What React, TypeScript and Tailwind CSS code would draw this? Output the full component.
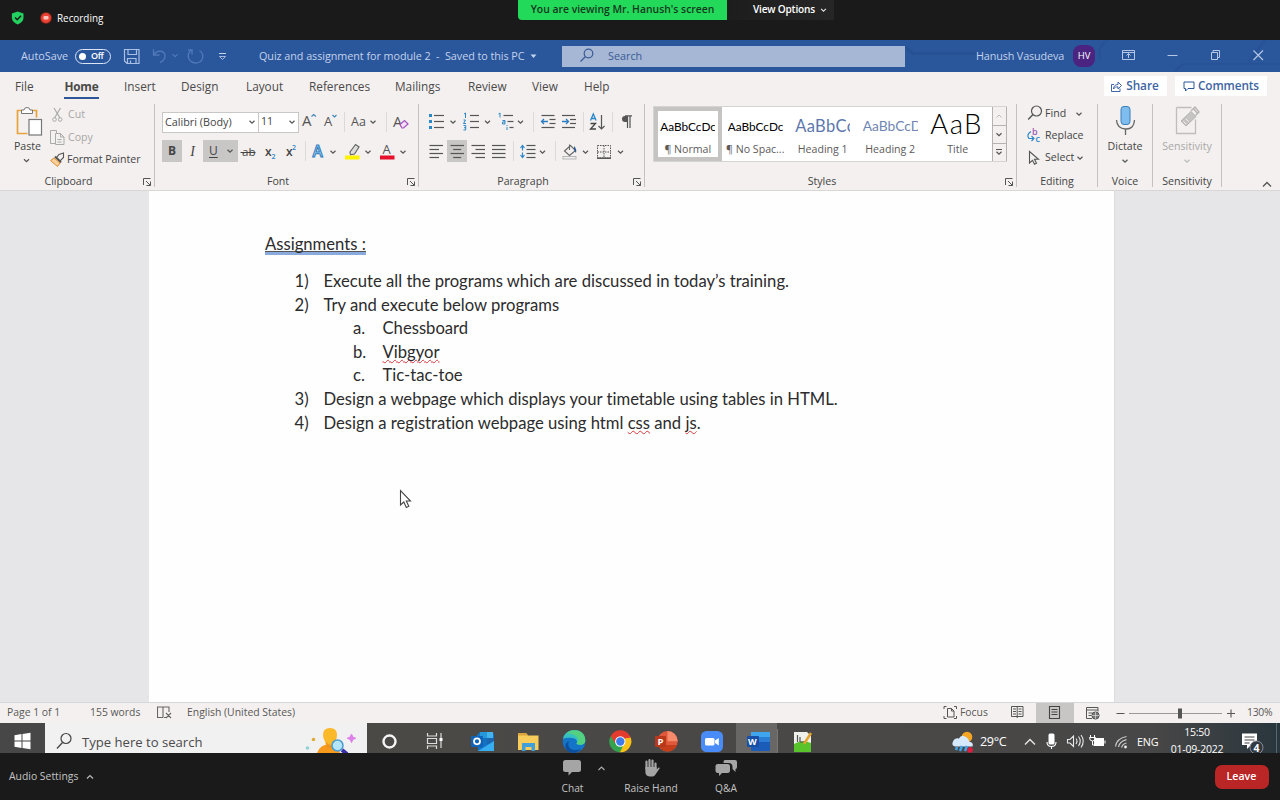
import type { ReactNode } from "react";

/** Vector icon whose user space starts at (x, y) and measures w × h pixels. */
function Ico({ x, y, w, h, children, className = "" }: { x: number; y: number; w: number; h: number; children: ReactNode; className?: string }) {
  return (
    <svg width={w} height={h} viewBox={`${x} ${y} ${w} ${h}`} fill="none" className={`block shrink-0 ${className}`}>
      {children}
    </svg>
  );
}

function Chev({ x, y, c = "#555", s = 2.5 }: { x: number; y: number; c?: string; s?: number }) {
  return <path d={`M${x - s} ${y - s / 2}l${s} ${s}l${s} ${-s}`} stroke={c} strokeWidth="1.2" />;
}

function Launcher() {
  return (
    <Ico x={142} y={178} w={10} h={10}>
      <path d="M143.5 186v-6.500h7" stroke="#555" />
      <path d="M146 182l4.500 4.500M150.500 182.500v4h-4" stroke="#555" />
    </Ico>
  );
}

function Group({ width, pad, label, launcher, children }: { width: string; pad: string; label: string; launcher?: boolean; children: ReactNode }) {
  return (
    <section className={`flex h-[86px] shrink-0 flex-col ${width}`}>
      <div className="flex h-[83px] flex-col border-r border-[#c4c2c1]">
        <div className={`h-[69px] shrink-0 ${pad}`}>{children}</div>
        <div className={`flex h-[18px] shrink-0 items-center ${launcher ? "pr-[2px]" : ""}`}>
          <span className={`flex-1 text-center ${launcher ? "pr-[5px]" : ""}`}>{label}</span>
          {launcher && <Launcher />}
        </div>
      </div>
    </section>
  );
}

function Sep() {
  return <i className="h-5 w-px shrink-0 bg-[#dcdad9]" />;
}

const lines = (x: number, y: number, w: number[], gap: number, off: number[] = []) =>
  w.map((n, i) => <path key={i} d={`M${x + (off[i] ?? 0)} ${y + i * gap}h${n}`} stroke="#555" strokeWidth="1.2" />);

function TopBar() {
  return (
    <header className="flex h-10 shrink-0 items-start bg-[#1a1a1a] text-white">
      <div className="flex h-9 w-[518px] items-center">
        <Ico x={8} y={8} w={44} h={20} className="ml-2">
          <path d="M17.700 11.500l5.800 2v4.500c0 3-2.500 5-5.800 6.600c-3.300-1.600-5.800-3.600-5.800-6.600v-4.500z" fill="#23d160" />
          <path d="M15 17.500l2.200 2.200l3.800-4" stroke="#1a1a1a" strokeWidth="1.500" />
          <circle cx="46" cy="18" r="6" fill="#7a2018" />
          <circle cx="46" cy="18" r="5" fill="#ea4335" />
          <rect x="43.500" y="16" width="5" height="3.500" rx="1" fill="#ffc4bc" />
        </Ico>
        <span className="ml-[5px] text-[9.9px]">Recording</span>
      </div>
      <div className="flex h-5 w-[209px] items-center justify-center whitespace-nowrap rounded-bl bg-[#23d959] text-[10.400px] font-semibold text-[#15381f]">
        You are viewing Mr. Hanush's screen
      </div>
      <div className="flex h-5 w-[107px] items-center gap-[5px] bg-[linear-gradient(90deg,#1d1d1d,#262626)] pl-[26px] text-[10.100px] font-semibold tracking-[-0.02em]">
        View Options
        <Ico x={0} y={0} w={7} h={6}><Chev x={3.5} y={3} c="#ddd" s={2.4} /></Ico>
      </div>
    </header>
  );
}

function TitleBar() {
  return (
    <div className="flex h-8 shrink-0 items-center bg-[#2a569b] text-[10.8px] text-[#c3d2ec]">
      <span className="ml-[21px] w-[54px]">AutoSave</span>
      <div className="flex h-[15px] w-9 items-center gap-[5px] rounded-full border-[1.5px] border-[#dce5f5] pl-[3px] text-[9px] font-semibold tracking-[-0.05em] text-white">
        <i className="size-[7px] rounded-full bg-white" />
        Off
      </div>
      <Ico x={111} y={46} w={148} h={20}>
        <path d="M124.500 49.500h14.500v14h-12l-2.500-2.500zM128 49.500v5h8.500v-5M127.500 63.500v-5h8.500v5M130.500 63v-2.500" stroke="#a9bfe3" strokeWidth="1.200" />
        <path d="M153.500 49v6h6M154 54.500c3-5 11-4 11 1.500c0 3-2 5-5 6.500" stroke="#4f78b8" strokeWidth="1.400" />
        <Chev x={175} y={55.500} c="#4f78b8" />
        <path d="M191 50.500c-5 4-3 12 4.500 12.500c8 0 9.500-9 4-12.500M188 50h4v4.500" stroke="#4f78b8" strokeWidth="1.400" />
        <path d="M219 53.500h7" stroke="#c3d2ec" />
        <path d="M219.500 56.500l3 3l3-3z" stroke="#c3d2ec" strokeWidth=".8" />
      </Ico>
      <span className="w-[270px] shrink-0 whitespace-pre tracking-[-0.005em]">Quiz and assignment for module 2  -  Saved to this PC</span>
      <Ico x={529} y={50} w={8} h={10}><path d="M530.500 53.500h6l-3 3.500z" fill="#c3d2ec" /></Ico>
      <div className="ml-[25px] flex h-[21px] w-[343px] shrink-0 items-center bg-[#a5b7d4] text-[#3a5a96]">
        <Ico x={562} y={46} w={46} h={20}>
          <circle cx="588.500" cy="53.500" r="4.300" stroke="#3a5a96" strokeWidth="1.200" />
          <path d="M585.500 56.500l-5 5" stroke="#3a5a96" strokeWidth="1.300" />
        </Ico>
        Search
      </div>
      <Ico x={905} y={40} w={71} h={32}>
        <path d="M905 47l8 6.500h63" stroke="#214b8b" strokeWidth="3" opacity=".5" />
      </Ico>
      <span className="w-[97px] shrink-0 tracking-[-0.012em]">Hanush Vasudeva</span>
      <span className="flex size-[22px] shrink-0 items-center justify-center rounded-lg bg-[#4b2380] text-[9.500px] text-white">HV</span>
      <Ico x={1095} y={40} w={185} h={32}>
        <path d="M1175 71l8-7h97M1247 64l18-24M1100 60q-3-14 8-20" stroke="#214b8b" strokeWidth="2" opacity=".35" />
        <path d="M1122.500 50.500h12v9h-12zM1122.500 52.500h12M1128.500 58v-4.500M1126.500 55.500l2-2l2 2" stroke="#b6c8e6" />
        <path d="M1167.500 55.500h10" stroke="#b6c8e6" />
        <path d="M1211.500 52.500h6v7h-6zM1213 52v-1.500h6.500v7h-1.500" stroke="#b6c8e6" />
        <path d="M1253.500 50.500l9.500 9.500M1263 50.500l-9.500 9.500" stroke="#b6c8e6" strokeWidth="1.100" />
      </Ico>
    </div>
  );
}

function Tabs() {
  return (
    <nav className="flex h-8 shrink-0 items-center text-[11.8px] text-[#4c4a49]">
      <span className="ml-[15px] w-[49px] shrink-0 pb-[3px]">File</span>
      <span className="w-[60px] shrink-0">
        <b className="inline-flex h-[22px] w-[35px] items-start justify-center border-b-[2.500px] border-[#2b579a] font-bold leading-[18px] tracking-[-0.02em] text-[#4a4948]">Home</b>
      </span>
      <span className="w-[57px] shrink-0 pb-[3px]">Insert</span>
      <span className="w-[65px] shrink-0 pb-[3px]">Design</span>
      <span className="w-[63px] shrink-0 pb-[3px]">Layout</span>
      <span className="w-[86px] shrink-0 pb-[3px]">References</span>
      <span className="w-[73px] shrink-0 pb-[3px]">Mailings</span>
      <span className="w-16 shrink-0 pb-[3px]">Review</span>
      <span className="w-[52px] shrink-0 pb-[3px]">View</span>
      <span className="w-[520px] shrink-0 pb-[3px]">Help</span>
      <button className="mb-1 flex h-5 w-[63px] shrink-0 items-center justify-center gap-[4px] bg-white pr-px text-[11.800px] font-semibold text-[#3d64a2]">
        <Ico x={1111} y={80} w={11} h={13}>
          <path d="M1114 84.500h-2.500v7h8.500v-3M1113.500 89c0-3 2-4.500 4.500-4.500v-2.500l3.500 3.500l-3.500 3.500v-2.200c-2 0-3.500.5-4.500 2.200z" stroke="#2b579a" strokeWidth=".9" />
        </Ico>
        Share
      </button>
      <button className="mb-1 ml-2 flex h-5 w-[92px] shrink-0 items-center justify-center gap-[3px] bg-white text-[11.800px] font-semibold text-[#3d64a2]">
        <Ico x={1182} y={80} w={12} h={13}>
          <path d="M1183 82h10v6.500h-6l-2.500 2.500v-2.500h-1.500z" stroke="#2b579a" />
        </Ico>
        <span className="tracking-[-0.01em]">Comments</span>
      </button>
    </nav>
  );
}

function Clipboard() {
  return (
    <Group width="w-[155px]" pad="flex pt-[2px]" label="Clipboard" launcher>
      <div className="flex w-[49px] flex-col pl-[13px]">
        <Ico x={13} y={106} w={32} h={32}>
          <path d="M22 110.500h-4.500v23h10M32 110.500h4.500v7" stroke="#e8a33d" strokeWidth="1.700" />
          <path d="M21.500 113.500v-3.500h2.500q.3-2.500 3-2.500t3 2.500h2.500v3.500z" fill="#fff" stroke="#777" />
          <rect x="29" y="119.500" width="12.500" height="15.500" fill="#fff" stroke="#777" strokeWidth="1.200" />
        </Ico>
        <span className="mt-px h-[15px] w-[36px] pl-px leading-[15px]">Paste</span>
        <Ico x={13} y={154} w={20} h={12}><Chev x={26.500} y={160.500} /></Ico>
      </div>
      <div className="flex flex-col text-[#a9a7a6]">
        <div className="flex h-[18px] items-center">
          <Ico x={49} y={106} w={18} h={18}>
            <path d="M54 108l6 10M60.500 108l-6 10" stroke="#aaa" strokeWidth="1.200" /><circle cx="54.500" cy="119.500" r="1.800" stroke="#aaa" /><circle cx="60.200" cy="119.500" r="1.800" stroke="#aaa" />
          </Ico>
          <span className="pl-px">Cut</span>
        </div>
        <div className="mt-[5px] flex h-[18px] items-center">
          <Ico x={49} y={128} w={18} h={18}>
            <path d="M55 142.500h-4.500v-13h6v2.500M55.500 132.500h5l3.500 3.500v7.500h-8.500zM60.500 132.500v3.500h3.500M57.500 138.500h4M57.500 141h4" stroke="#aaa" />
          </Ico>
          <span className="pl-px">Copy</span>
        </div>
        <div className="mt-1 flex h-[18px] items-center text-[#444]">
          <Ico x={49} y={150} w={18} h={18}>
            <path d="M59 153.500l4.500-1.500v4.500l-3.500 3.500l-3.500-3.500z" stroke="#555" strokeWidth="1.100" fill="#f3f0ef" />
            <path d="M55 155.500l6 6" stroke="#555" strokeWidth="2" />
            <path d="M54 157l-3.500 2.500l7 6l2.500-3.500z" fill="#f8d09b" stroke="#e08a2c" />
          </Ico>
          <span className="tracking-[-0.003em]">Format Painter</span>
        </div>
      </div>
    </Group>
  );
}

function FontGroup() {
  return (
    <Group width="w-[264px]" pad="pt-[6px] pl-[7px]" label="Font" launcher>
      <div className="flex h-6 items-center">
        <div className="flex h-[21px] w-[97px] items-center justify-between whitespace-nowrap border border-[#c9c7c6] bg-white pl-[2px] pr-[2px] text-[10.800px]">
          Calibri (Body)
          <Ico x={0} y={0} w={8} h={8}><Chev x={4} y={4} /></Ico>
        </div>
        <div className="-ml-px flex h-[21px] w-[41px] items-center justify-between border border-[#c9c7c6] bg-white pl-[2px] pr-[2px]">
          11
          <Ico x={0} y={0} w={8} h={8}><Chev x={4} y={4} /></Ico>
        </div>
        <Ico x={299} y={110} w={45} h={24}>
          <g fill="#555" fontSize="15" fontFamily="Open Sans, sans-serif"><text x="302" y="126">A</text><text x="324" y="126" fontSize="13">A</text></g>
          <path d="M311.500 116.500l2.200-2l2.200 2M332.500 115l2 2l2-2" stroke="#3a86b8" strokeWidth="1.100" />
        </Ico>
        <Sep />
        <Ico x={345} y={110} w={41} h={24}>
          <text x="351" y="126" fill="#555" fontSize="12.500" fontFamily="Open Sans, sans-serif">Aa</text><Chev x={373} y={122} />
        </Ico>
        <Sep />
        <Ico x={387} y={110} w={28} h={24}>
          <text x="393" y="126.500" fill="#555" fontSize="14.500" fontFamily="Open Sans, sans-serif">A</text>
          <path d="M400 124.500l4.500-4l3.500 3.500l-4.500 4h-1.500z" fill="#f3e3f8" stroke="#a64fc0" strokeWidth="1.200" />
        </Ico>
      </div>
      <div className="mt-[5px] flex h-6 items-center">
        <span className="flex h-[22px] w-5 items-center justify-center bg-[#c9c7c6] text-[12px] font-bold">B</span>
        <span className="flex h-[22px] w-[21px] items-center justify-center font-['Liberation_Serif',serif] text-[14px] italic">I</span>
        <span className="flex h-[22px] w-[35px] items-center gap-[8px] bg-[#c9c7c6] pl-[6px] text-[12px]">
          <u className="underline-offset-2">U</u>
          <Ico x={0} y={0} w={8} h={8}><Chev x={4} y={4} /></Ico>
        </span>
        <Ico x={238} y={140} w={67} h={24}>
          <g fill="#444" fontFamily="Open Sans, sans-serif"><text x="242" y="156.500" fontSize="11.500">ab</text><text x="265" y="156.500" fontSize="12" fontWeight="600">x</text><text x="286" y="156.500" fontSize="12" fontWeight="600">x</text></g>
          <path d="M240.500 153.500h15" stroke="#444" />
          <g fill="#2b88c8" fontFamily="Open Sans, sans-serif" fontSize="7" fontWeight="600"><text x="271.500" y="159.500">2</text><text x="292" y="151">2</text></g>
        </Ico>
        <Sep />
        <Ico x={306} y={139} w={109} h={24}>
          <text x="312.500" y="157" fontSize="15.500" fontWeight="600" fill="#b9dcf5" stroke="#2b7cc0" strokeWidth="1" fontFamily="Open Sans, sans-serif">A</text>
          <Chev x={333} y={152} />
          <path d="M350 152l5.500-7.500l3.500 2.500l-4.500 7l-4 .8z" stroke="#666" strokeWidth="1.200" fill="#ddd" />
          <rect x="345" y="155.500" width="14.500" height="4" fill="#fff200" />
          <Chev x={368} y={152} />
          <text x="382.500" y="154" fontSize="13" fill="#555" fontFamily="Open Sans, sans-serif">A</text>
          <rect x="380" y="155.500" width="14.500" height="4" fill="#e8112d" />
          <Chev x={403} y={152} />
        </Ico>
      </div>
    </Group>
  );
}

function Paragraph() {
  return (
    <Group width="w-[226px]" pad="pt-[6px] pl-[6px]" label="Paragraph" launcher>
      <div className="flex h-6 items-center">
        <Ico x={425} y={110} w={108} h={24}>
          {[115.500, 121.500, 127.500].map((y) => (
            <g key={y}><rect x="429" y={y - 1.500} width="3" height="3" fill="#2b88c8" /><path d={`M434 ${y}h10`} stroke="#555" strokeWidth="1.200" /></g>
          ))}
          <Chev x={453} y={122} />
          {lines(470, 115.500, [9, 9, 9], 6)}
          <path d="M464 114l1.500-1v5M463.500 120h2l-2 3.500h2.500M463.500 125.500h2.200v4.500h-2.200M464 127.700h1.700M498.500 114l1.500-1v4.500M502.500 120.500h2.500v3.500h-2.500v-2h2.500M507 127v3M507 125v1" stroke="#2b88c8" strokeWidth="1" />
          <Chev x={487.500} y={122} />
          {lines(503.500, 115.500, [9.500, 6, 4], 6, [0, 4, 6])}
          <Chev x={520.500} y={122} />
        </Ico>
        <Sep />
        <Ico x={534} y={110} w={49} h={24}>
          {lines(541.500, 115.500, [13, 6, 6, 13], 4, [0, 8, 8])}
          <path d="M548 121.500h-6.500M544 119l-2.500 2.500l2.500 2.500" stroke="#2b7cc0" strokeWidth="1.300" />
          {lines(562, 115.500, [13, 6, 6, 13], 4, [0, 8, 8])}
          <path d="M562 121.500h6.500M566 119l2.500 2.500l-2.500 2.500" stroke="#2b7cc0" strokeWidth="1.300" />
        </Ico>
        <Sep />
        <Ico x={584} y={110} w={28} h={24}>
          <path d="M590.500 120.500l2.800-6.500l2.800 6.500M591.500 118.500h3.600" stroke="#2b88c8" strokeWidth="1.300" />
          <path d="M590.500 123.500h5l-5 5.500h5.500" stroke="#444" strokeWidth="1.300" />
          <path d="M601.500 115v14M598.500 126l3 3l3-3" stroke="#555" strokeWidth="1.200" />
        </Ico>
        <Sep />
        <Ico x={613} y={110} w={28} h={24}>
          <path d="M627 116h-2a3 3 0 0 0 0 6h2z" fill="#555" /><path d="M625 115.800h7M627.500 116v12M630 116v12" stroke="#555" strokeWidth="1.200" />
        </Ico>
      </div>
      <div className="mt-[5px] flex h-6 items-center">
        <Ico x={425} y={139} w={22} h={24}>{lines(429.500, 145.500, [13.500, 9.500, 13.500, 9.500], 4)}</Ico>
        <span className="flex h-[22px] w-5 items-center justify-center bg-[#c9c7c6]"><Ico x={447} y={140} w={20} h={22}>{lines(450.500, 145.500, [13.500, 8, 13.500, 8], 4, [0, 2.700, 0, 2.700])}</Ico></span>
        <Ico x={467} y={139} w={46} h={24}>
          {lines(471.500, 145.500, [13.500, 9.500, 13.500, 9.500], 4, [0, 4, 0, 4])}
          {lines(492, 145.500, [13.500, 13.500, 13.500, 13.500], 4)}
        </Ico>
        <Sep />
        <Ico x={514} y={139} w={41} h={24}>
          {lines(526.500, 145.500, [9, 9, 9, 9], 4)}
          <path d="M522.500 145v13M520.500 148l2-2.500l2 2.500M520.500 155l2 2.500l2-2.500" stroke="#2b88c8" strokeWidth="1.200" /><path d="M521 151.500h3" stroke="#f3f0ef" strokeWidth="2" />
          <Chev x={542.500} y={152} />
        </Ico>
        <Sep />
        <Ico x={556} y={139} w={84} h={24}>
          <path d="M564.500 151l6-5.500l5 5l-6 5zM569.500 150v-5.500" stroke="#666" strokeWidth="1.100" /><path d="M574 146q3 3 2 7l-2-3z" fill="#2b5c90" /><rect x="563" y="156.500" width="13" height="2.500" fill="#eee" stroke="#aaa" strokeWidth=".8" />
          <Chev x={585.500} y={152} />
          <path d="M597.500 145.500h13v12.500h-13zM604 145.500v12.500M597.500 152h13" stroke="#555" strokeWidth="1" strokeDasharray="1.500 1" /><path d="M597 158.200h14" stroke="#444" strokeWidth="1.300" />
          <Chev x={620.500} y={152} />
        </Ico>
      </div>
    </Group>
  );
}

function Style({ sample, name, look, selected }: { sample: string; name: string; look: string; selected?: boolean }) {
  return (
    <div className={`flex h-[54px] w-[67.500px] shrink-0 flex-col items-center pt-[3px] ${selected ? "shadow-[inset_0_0_0_4px_#c6c4c3]" : ""}`}>
      <div className={`flex h-[27px] w-[55px] overflow-hidden whitespace-nowrap font-[Lato,sans-serif] ${look}`}>{sample}</div>
      <span className="mt-[5px] leading-[14px] text-[#5c5a59]">{name}</span>
    </div>
  );
}

function Styles() {
  return (
    <Group width="w-[372px]" pad="pt-[2px] pl-[8px]" label="Styles" launcher>
      <div className="flex h-[56px] w-[354px] border border-[#d6d4d3] bg-white">
        <Style selected sample="AaBbCcDc" name="¶ Normal" look="items-end text-[11.8px] text-black pb-px" />
        <Style sample="AaBbCcDc" name="¶ No Spac..." look="items-end text-[11.8px] text-black pb-px" />
        <Style sample="AaBbCc" name="Heading 1" look="items-end -mb-[2px] translate-y-[2px] text-[16.5px] tracking-[0.02em] text-[#5c77ad] mb-0" />
        <Style sample="AaBbCcD" name="Heading 2" look="items-end text-[13.800px] text-[#6f86b5]" />
        <Style sample="AaB" name="Title" look="items-center text-[27.5px] font-light tracking-[0.05em] text-black" />
        <Ico x={993} y={106} w={15} h={54} className="bg-[#f3f0ef]">
          <path d="M993.500 106v56M993 124.500h15M993 142.500h15M1007.500 106v56" stroke="#b5b3b2" />
          <path d="M997.500 116.500l2.500-2.500l2.500 2.500" stroke="#bbb" /><Chev x={1000} y={133.500} /><path d="M997 148.500h6" stroke="#555" /><Chev x={1000} y={152} />
        </Ico>
      </div>
    </Group>
  );
}

function Ribbon() {
  return (
    <div className="flex h-[87px] shrink-0 overflow-hidden border-b border-[#d9d7d6] text-[10.600px] text-[#444]">
      <Clipboard />
      <FontGroup />
      <Paragraph />
      <Styles />
      <Group width="w-[81px]" pad="pl-[9px]" label="Editing">
        <div className="flex h-[20px] items-center">
          <Ico x={1026} y={104} w={18} h={20}><circle cx="1036.500" cy="111" r="5" stroke="#555" strokeWidth="1.200" /><path d="M1033 114.500l-4.800 5" stroke="#555" strokeWidth="1.400" /></Ico>
          <span className="w-[31px] pl-px">Find</span><Ico x={0} y={0} w={8} h={8}><Chev x={4} y={4} /></Ico>
        </div>
        <div className="mt-[2px] flex h-5 items-center">
          <Ico x={1026} y={126} w={18} h={20}>
            <g fontFamily="Open Sans, sans-serif" fontSize="9" fontWeight="600"><text x="1032" y="135" fill="#a05ab5">b</text><text x="1035.500" y="142" fill="#2b88c8">c</text></g><path d="M1031 131.500q-5 3-2 7h4.500M1031.500 136l2.500 2.500l-2.500 2.500" stroke="#2b88c8" strokeWidth="1.200" />
          </Ico>
          <span className="pl-px">Replace</span>
        </div>
        <div className="mt-[2px] flex h-5 items-center">
          <Ico x={1026} y={147} w={18} h={20}><path d="M1029.500 150.500v11.500l3-2.700l2 4l2-1l-2-4h4z" stroke="#555" strokeWidth="1.100" /></Ico>
          <span className="w-[32px] pl-px">Select</span><Ico x={0} y={0} w={8} h={8}><Chev x={4} y={4} /></Ico>
        </div>
      </Group>
      <Group width="w-[55px]" pad="flex flex-col items-center" label="Voice">
        <Ico x={1112} y={104} w={26} h={34}>
          <rect x="1121" y="106.500" width="9" height="18" rx="3" fill="#7fbdee" stroke="#3a7fb8" />
          <path d="M1116.500 120q.5 8.500 9 9t9-9M1125.500 129v6" stroke="#666" strokeWidth="1.300" />
        </Ico>
        <span className="leading-[16px]">Dictate</span>
        <Ico x={0} y={0} w={10} h={12}><Chev x={5} y={7} /></Ico>
      </Group>
      <Group width="w-[69px]" pad="flex flex-col items-center text-[#aaa8a7]" label="Sensitivity">
        <Ico x={1174} y={104} w={28} h={34}>
          <path d="M1177.500 107.500h15M1177.500 107.500v26h19v-14" stroke="#c0bebd" strokeWidth="1.300" />
          <path d="M1182 121l10-9.500l5 5l-10 9.500z" fill="#c6c4c3" stroke="#b5b3b2" /><path d="M1184.500 121.500l2.500 2.500M1187 119l2.500 2.500" stroke="#f3f0ef" /><path d="M1192 111l4-4l4 5l-3.500 3.500M1194 108l5 6" stroke="#b5b3b2" strokeWidth="1.300" />
        </Ico>
        <span className="leading-[16px]">Sensitivity</span>
        <Ico x={0} y={0} w={10} h={12}><Chev x={5} y={7} c="#bbb" /></Ico>
      </Group>
      <div className="flex flex-1 items-end justify-end pb-[2px] pr-2"><Ico x={0} y={0} w={10} h={8}><path d="M1 6.500l4-4l4 4" stroke="#555" strokeWidth="1.300" /></Ico></div>
    </div>
  );
}

function Squiggle({ children }: { children: ReactNode }) {
  return <span className="underline decoration-[#d8383c] decoration-wavy decoration-[1px] underline-offset-[1px] [text-decoration-skip-ink:none]">{children}</span>;
}

function Item({ n, sub, children }: { n: string; sub?: boolean; children: ReactNode }) {
  return (
    <li className={`flex h-[23.650px] items-center whitespace-nowrap ${sub ? "pl-[88px]" : "pl-[29.500px]"}`}>
      <span className={`shrink-0 ${sub ? "w-[29.500px]" : "w-[29px]"}`}>{n}</span>
      <span>{children}</span>
    </li>
  );
}

function Document() {
  return (
    <main className="relative flex h-[511px] shrink-0 bg-[#e6e5e7] pl-[149px]">
      <article className="h-full w-[966px] border-r border-[#dcdbdd] bg-[#fefefe] pl-[116px] pt-[42px] font-[Lato,sans-serif] text-[16.650px] text-[#2c2c2c] [font-variant-ligatures:none]">
        <h1 className="h-[22px] w-[101px] whitespace-nowrap border-b-[3px] border-[#8aa9dc] leading-[23px]"><span className="inline-block h-[19px] border-b border-[#555]">Assignments :</span></h1>
        <ol className="mt-[14.600px]">
          <Item n="1)">Execute all the programs which are discussed in today’s training.</Item>
          <Item n="2)">Try and execute below programs</Item>
          <Item n="a." sub>Chessboard</Item>
          <Item n="b." sub><Squiggle>Vibgyor</Squiggle></Item>
          <Item n="c." sub>Tic-tac-toe</Item>
          <Item n="3)">Design a webpage which displays your timetable using tables in HTML.</Item>
          <Item n="4)">Design a registration webpage using html <Squiggle>css</Squiggle> and <Squiggle>js</Squiggle>.</Item>
        </ol>
      </article>
      <svg className="absolute left-[399px] top-[298px]" width="14" height="21" fill="none"><path d="M1.500 1.500v14.500l3.300-3l2.500 5.500l2.500-1.200l-2.500-5.300h4.200z" fill="#fff" stroke="#444" strokeWidth="1.100" /></svg>
    </main>
  );
}

function StatusBar() {
  return (
    <div className="flex h-[21px] shrink-0 items-center border-t border-[#d5d8db] bg-[#f3f0ef] text-[10.400px] text-[#5a5857]">
      <span className="ml-[7px] w-[83px]">Page 1 of 1</span>
      <span className="w-[67px]">155 words</span>
      <Ico x={157} y={703} w={30} h={20}><path d="M163 717.500h-5.500v-10.500h5.500v10.500M163 707h6v5M164 717.500h2M166 713l5 5M171 713l-5 5" stroke="#666" strokeWidth="1.100" /></Ico>
      <span className="w-[756px]">English (United States)</span>
      <Ico x={943} y={703} w={17} h={20}><path d="M944 709v-2.500h2.500M954 706.500h2.500v2.500M944 716v2.500h2.500M954 718.500h2.500v-2.500M947.500 708.500h4l2.500 2.500v6h-6.500zM951.500 708.500v2.500h2.500" stroke="#555" /></Ico>
      <span className="w-[47px]">Focus</span>
      <Ico x={1007} y={703} w={29} h={20}><path d="M1011.500 706.500h11.500v10h-11.500zM1017.200 706v12M1013 709h3M1013 711.500h3M1013 714h3M1018.500 709h3M1018.500 711.500h3M1018.500 714h3" stroke="#555" /></Ico>
      <span className="flex h-[21px] w-[38px] items-center justify-center bg-[#c8c6c5]"><Ico x={1048} y={703} w={14} h={20}><path d="M1049.500 706.500h10v12h-10zM1051.500 709.500h6M1051.500 712h6M1051.500 714.500h6" stroke="#444" strokeWidth="1.100" /></Ico></span>
      <Ico x={1074} y={702} w={172} h={20}>
        <path d="M1092 717.500h-5.500v-11h11.500v4M1086.500 709h11.500M1088.500 712h4M1088.500 714.500h3" stroke="#555" /><circle cx="1095.500" cy="714.500" r="3.600" fill="#777" stroke="#555" /><path d="M1092 714.500h7M1095.500 711v7" stroke="#ddd" strokeWidth=".7" />
        <path d="M1116.500 712.500h8M1227 712.500h8M1231 708.500v8" stroke="#555" strokeWidth="1.100" /><path d="M1129 712.500h93" stroke="#999" /><rect x="1178" y="707.500" width="4" height="10" fill="#555" />
      </Ico>
      <span className="ml-[1px] tracking-[-0.03em]">130%</span>
    </div>
  );
}

function Taskbar() {
  return (
    <div className="flex h-[30px] shrink-0 overflow-hidden bg-[linear-gradient(90deg,#484747_0%,#4a4946_30%,#484747_90%,#29363d_100%)] text-white">
      <Ico x={0} y={723} w={45} h={30}><path d="M14.500 735.200l7-1.100v6.400h-7zM22.500 734l8-1.200v7.700h-8zM14.500 741.500h7v6.400l-7-1.100zM22.500 741.500h8v7.700l-8-1.200z" fill="#fff" /></Ico>
      <div className="flex w-[322px] shrink-0 bg-[#f2f1f1] text-[13.100px] text-[#4a4a4a]">
        <Ico x={45} y={723} w={37} h={30}><circle cx="66" cy="738.500" r="5" stroke="#444" strokeWidth="1.200" /><path d="M62.500 742.500l-5.500 6" stroke="#444" strokeWidth="1.300" /></Ico>
        <span className="w-[218px] pt-[9px] leading-[20px]">Type here to search</span>
        <Ico x={300} y={723} w={67} h={30}>
          <path d="M317 753q3-9 14-9q8 1 9 9z" fill="#f79a1e" /><path d="M323 735q0-7 7-7t7 7q0 4-2 6.500q-1 6-5 6t-5-6q-2-3-2-6.500z" fill="#fbb829" />
          <path d="M326 742q5 6 9 0l-1 6h-7z" fill="#f0941c" /><circle cx="337.500" cy="745.500" r="5.500" fill="#b5e5f8" stroke="#4b9bd0" strokeWidth="1.500" /><path d="M342 750l5 4" stroke="#3b2fa8" strokeWidth="4" />
          <circle cx="313.500" cy="739.500" r="1.800" fill="#e0a93b" /><circle cx="307.500" cy="748" r="1.800" fill="#8fd3d6" /><path d="M351.500 734l1.300 3l3 1.300l-3 1.300l-1.300 3l-1.300-3l-3-1.300l3-1.300z" fill="#dd80ea" stroke="#dd80ea" />
        </Ico>
      </div>
      <Ico x={367} y={723} w={369} h={30}>
        <circle cx="389.500" cy="741.500" r="6" stroke="#f5f5f5" strokeWidth="2.400" />
        <path d="M427.500 733v3h9v-3M427.500 749v-3h9v3M427.500 738.500h9v5h-9zM441 733v15" stroke="#ddd" strokeWidth="1.200" /><rect x="439.500" y="738" width="3" height="3" fill="#fff" />
        <path d="M477 735l3-3h12l2 2v17h-16z" fill="#1272c4" /><path d="M480 732h7v6h-7z" fill="#2598dc" /><path d="M487 732h6v6h-6z" fill="#46b4ec" /><path d="M487 738h7v6h-7z" fill="#1c66b0" /><path d="M478 751l16-10v10z" fill="#36aef0" /><rect x="471" y="736" width="12" height="11" rx="1" fill="#0f63b8" /><circle cx="477" cy="741.300" r="3" stroke="#fff" strokeWidth="1.700" />
        <path d="M518 733h8l2 2.500h10.500v14.500h-20.500z" fill="#f8cc5a" /><path d="M518 733h8l2 2.500h-10z" fill="#dba43c" /><path d="M522 751v-8h13v8h-3.500v-4h-6v4z" fill="#3f9fd8" />
        <circle cx="574" cy="741.500" r="11.300" fill="#1374c8" /><path d="M563 739c2-12 22-12 22.300 1c0 5-5 6-9 4c2-2 0-6-4-6c-4-.5-8 0-9.300 1z" fill="#35c1c0" /><path d="M574 730.200c8 0 11.300 5 11.300 10.500c0 4-5 5-9 3c5-4-1-11-10-10q3-3.500 7.700-3.500z" fill="#5fd66b" opacity=".75" /><path d="M569 741c-3 7 4 11 12 8q-5 6-13 2.500q-6-6 1-10.500z" fill="#0d4f9c" />
        <path d="M610.800 736a10.800 10.800 0 0 1 19 0l-9.500 5.500z" fill="#e33b2e" /><path d="M629.800 736a10.800 10.800 0 0 1-9.800 16.300l.5-11z" fill="#fbc116" /><path d="M610.800 736a10.800 10.800 0 0 0 9.200 16.300l4-8.300l-7-2z" fill="#34a350" /><path d="M610.800 736h19v2h-10l-5 5z" fill="#e33b2e" /><circle cx="620.300" cy="741.500" r="5.200" fill="#fff" /><circle cx="620.300" cy="741.500" r="4.200" fill="#3d7bea" />
        <circle cx="667.500" cy="741.300" r="10.200" fill="#e0573a" /><path d="M667.500 731.100a10.200 10.200 0 0 1 10.200 10.200h-10.200z" fill="#f58b6b" /><path d="M658 745h19q-3 6.500-9.500 6.500t-9.500-6.500z" fill="#c43e1c" /><rect x="655" y="736" width="11" height="11" rx="1" fill="#b7381b" /><text x="657.500" y="745" fontSize="9.500" fontWeight="700" fill="#fff" fontFamily="Open Sans, sans-serif">P</text>
        <rect x="701" y="731" width="22" height="21" rx="5.500" fill="#4a8cf7" /><rect x="705" y="738" width="9.500" height="7.500" rx="1.500" fill="#fff" /><path d="M715 740.500l3.800-2.500v7.500l-3.800-2.500z" fill="#fff" />
      </Ico>
      <Ico x={736} y={723} w={41} h={30} className="bg-[#686766]">
        <rect x="751" y="732" width="19" height="19" rx="1" fill="#1b5cb8" /><rect x="751" y="732" width="19" height="5" fill="#3fa5ee" /><rect x="751" y="737" width="19" height="5" fill="#2b7cd3" /><rect x="747" y="736" width="12" height="11" rx="1" fill="#174ea6" /><text x="748" y="745" fontSize="9" fontWeight="700" fill="#fff" fontFamily="Open Sans, sans-serif">W</text>
      </Ico>
      <Ico x={777} y={723} w={203} h={30}>
        <path d="M777.500 729v24" stroke="#777" />
        <path d="M794 732h13l4 4v16h-17z" fill="#eef1ea" /><path d="M794 744q8-5 17-1v9h-17z" fill="#58c32a" /><path d="M797.500 735v7M800 737v5M800 742h5" stroke="#555" strokeWidth="1.200" /><path d="M804 744l7-11" stroke="#e3a32c" strokeWidth="2.500" />
        <circle cx="967" cy="737" r="5.300" fill="#f5a524" /><path d="M955 746.500q-4-1-2-5t6-3q2-4 6-2t4 5q5 1 3.500 5z" fill="#d6e8fb" /><path d="M957 747l-1 3M962 746l-2 5M967 746l-2 5" stroke="#3fa5e8" strokeWidth="2.500" /><circle cx="970" cy="750" r="2.800" fill="#e01b3c" />
      </Ico>
      <span className="w-[42px] shrink-0 pt-[10px] text-[12.600px] leading-[18px] tracking-[-0.03em]">29°C</span>
      <Ico x={1022} y={723} w={115} h={30}>
        <path d="M1025 744.500l5-5l5 5" stroke="#e8e8e8" strokeWidth="1.400" />
        <rect x="1048.500" y="733.500" width="6" height="11" rx="1.500" fill="#fff" /><path d="M1047 742q0 4.500 4.500 4.500t4.500-4.500M1051.500 746v3" stroke="#fff" strokeWidth="1.100" />
        <path d="M1067.500 739.500h2.500l3.500-3.500v10.500l-3.500-3.500h-2.500zM1076 738.500q2 2.500 0 5.500M1078.500 736.500q3.500 4.500 0 9.500M1081 735q4.500 6 0 12.500" stroke="#e8e8e8" strokeWidth="1.100" />
        <rect x="1094.500" y="738.500" width="9" height="7" fill="#fff" stroke="#fff" /><path d="M1105 740.500v3M1090.500 735v2M1094.500 735v2M1089.500 737.500h6q0 3.500-3 3.500t-3-3.500zM1092.500 741v4h2" stroke="#fff" />
        <path d="M1115.500 746.500q1-8 11-10M1118.500 747q1-5.500 8-7.300M1121.500 747.500q1-3.500 5-4.500" stroke="#ccc" strokeWidth="1.200" /><circle cx="1125.500" cy="747" r="1.400" fill="#eee" />
      </Ico>
      <span className="w-[28px] shrink-0 pt-[10px] text-[10.800px] leading-[17px] tracking-[-0.02em]">ENG</span>
      <div className="flex h-[40px] w-[64px] shrink-0 flex-col items-center text-[10.500px] leading-[17px] tracking-[-0.02em]"><span className="pt-[1px]">15:50</span><span className="whitespace-nowrap">01-09-2022</span></div>
      <Ico x={1229} y={723} w={51} h={30}>
        <path d="M1242 733.500h15v11.500h-6l-4 4v-4h-5z" fill="#fff" /><path d="M1244.500 737h10M1244.500 740h10M1244.500 743h5" stroke="#444" strokeWidth="1.100" /><circle cx="1256.500" cy="747.500" r="6.500" fill="#303a40" stroke="#889" /><text x="1253.500" y="751.500" fontSize="10.500" fontWeight="700" fill="#fff" fontFamily="Open Sans, sans-serif">4</text><path d="M1276.500 723v30" stroke="#5b666c" />
      </Ico>
    </div>
  );
}

function CallBar() {
  return (
    <footer className="flex h-[47px] shrink-0 bg-[#1a1a1a] text-[10.200px] text-[#c4c4c4]">
      <div className="flex w-[552px] shrink-0 items-center pl-[9px]"><span className="w-[77px] text-[10.400px]">Audio Settings</span><Ico x={0} y={0} w={8} h={8}><path d="M1 5.500l3-3l3 3" stroke="#bbb" strokeWidth="1.200" /></Ico></div>
      <div className="flex w-10 shrink-0 flex-col items-center">
        <Ico x={562} y={753} w={20} h={27}><path d="M565.500 760h13q2.500 0 2.500 2.500v7q0 2.500-2.500 2.500h-6.500l-3.500 3.500v-3.500h-3q-2.500 0-2.500-2.500v-7q0-2.500 2.500-2.500z" fill="#a5a5a5" /></Ico>
        <span className="pl-px leading-[16px]">Chat</span>
      </div>
      <Ico x={592} y={753} w={19} h={27}><path d="M598.500 770l3-3l3 3" stroke="#aaa" strokeWidth="1.200" /></Ico>
      <div className="flex w-20 shrink-0 flex-col items-center">
        <Ico x={641} y={753} w={20} h={27}><path d="M646.500 769v-7.500M649.500 768v-8M652.500 768v-7.500M655.500 769v-5.500" stroke="#a5a5a5" strokeWidth="2.200" strokeLinecap="round" /><path d="M645.400 767h11.200v2.500l2-2q1.500-.5 1 1l-4.500 6.500q-1 1.500-3 1.500h-2.500q-4-.5-4.200-4z" fill="#a5a5a5" /></Ico>
        <span className="leading-[16px]">Raise Hand</span>
      </div>
      <div className="ml-[15px] flex w-10 shrink-0 flex-col items-center">
        <Ico x={714} y={753} w={24} h={27}><path d="M725 760h10q2 0 2 2v5q0 2-1.500 2v3l-3-3v-2q0-4-4-4h-5v-1q0-2 1.500-2z" fill="#a5a5a5" /><path d="M718 764h9.500q2.500 0 2.500 2v5q0 2-2.500 2h-5.500l-3 3v-3h-1q-2.500 0-2.500-2v-5q0-2 2.500-2z" fill="#a5a5a5" /></Ico>
        <span className="leading-[16px]">Q&amp;A</span>
      </div>
      <div className="flex flex-1 items-center justify-end pr-[11px]"><button className="flex h-6 w-[54px] items-center justify-center rounded-[7px] bg-[#ba2525] pr-px text-[10.600px] font-semibold text-white">Leave</button></div>
    </footer>
  );
}

export default function App() {
  return (
    <div className="flex h-[800px] w-[1280px] flex-col overflow-hidden bg-[#f3f0ef] font-['Open_Sans','Noto_Sans',sans-serif] leading-normal">
      <TopBar />
      <TitleBar />
      <Tabs />
      <Ribbon />
      <Document />
      <StatusBar />
      <Taskbar />
      <CallBar />
    </div>
  );
}
